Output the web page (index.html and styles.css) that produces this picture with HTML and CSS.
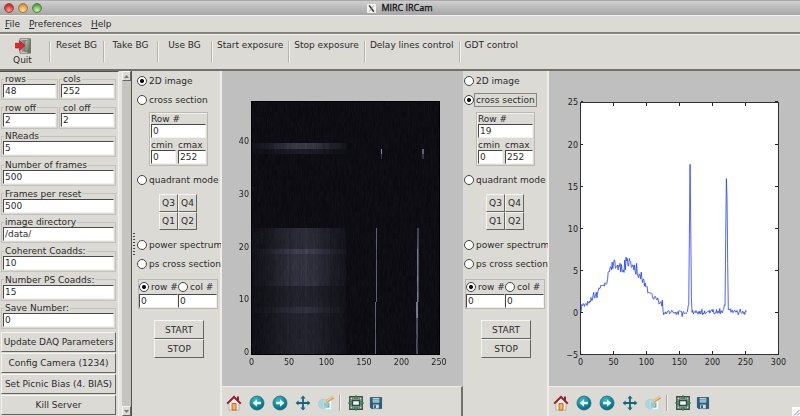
FILE: index.html
```html
<!DOCTYPE html>
<html lang="en">
<head>
<meta charset="utf-8">
<title>MIRC IRCam</title>
<link rel="stylesheet" href="styles.css">
</head>
<body>
<svg class="defs" aria-hidden="true">
  <defs>
    <radialGradient id="teal" cx="40%" cy="30%" r="75%">
      <stop offset="0" stop-color="#3fb9c6"/><stop offset=".6" stop-color="#0f8a9c"/><stop offset="1" stop-color="#0b5f70"/>
    </radialGradient>
    <linearGradient id="door" x1="0" y1="0" x2="1" y2="1">
      <stop offset="0" stop-color="#c8ccc4"/><stop offset=".5" stop-color="#8c9486"/><stop offset="1" stop-color="#3f6a2c"/>
    </linearGradient>
    <symbol id="i-home" viewBox="0 0 16 16">
      <path d="M3 8v7.2h10V8L8 3z" fill="#f4efe8" stroke="#a58f80" stroke-width=".6"/>
      <path d="M11 1.5h2v4h-2z" fill="#8d2434"/>
      <path d="M6 8.5h4v6.5H6z" fill="#f7b45a" stroke="#b5651d" stroke-width=".9"/>
      <path d="M1.2 8.6 8 1.8l6.8 6.8" fill="none" stroke="#a3162e" stroke-width="2"/>
    </symbol>
    <symbol id="i-back" viewBox="0 0 16 16">
      <circle cx="8" cy="8" r="7" fill="url(#teal)" stroke="#1b6674" stroke-width=".7"/>
      <path d="M3.6 8 8 4.2v2.5h4v2.6H8v2.5z" fill="#eafcff"/>
    </symbol>
    <symbol id="i-forward" viewBox="0 0 16 16">
      <circle cx="8" cy="8" r="7" fill="url(#teal)" stroke="#1b6674" stroke-width=".7"/>
      <path d="M12.4 8 8 4.2v2.5H4v2.6h4v2.5z" fill="#eafcff"/>
    </symbol>
    <symbol id="i-pan" viewBox="0 0 16 16">
      <path d="M8 .6l2.6 3H8.9v3.5h3.5V5.4l3 2.6-3 2.6V8.9H8.9v3.5h1.7l-2.6 3-2.6-3h1.7V8.9H3.6v1.7L.6 8l3-2.6v1.7h3.5V3.6H5.4z" fill="#17667c"/>
    </symbol>
    <symbol id="i-zoom" viewBox="0 0 16 16">
      <path d="M4.2 4.6h9.6v10.2H4.2z" fill="#f4fbfb" stroke="#b4d6da" stroke-width=".7"/>
      <path d="M6 7.6h5.4v5H6z" fill="#6fa9b3"/>
      <circle cx="5.2" cy="9" r="4.8" fill="#9fd3da" fill-opacity=".75" stroke="#a9cdd2" stroke-width=".8"/>
      <path d="M8.6 6.6 15.4 2.2" stroke="#e0964b" stroke-width="3"/>
      <path d="M8.6 6 15 1.8" stroke="#f8cf98" stroke-width="1.2"/>
    </symbol>
    <symbol id="i-subplots" viewBox="0 0 16 16">
      <path d="M1.8 1.8h12.4v12.4H1.8z" fill="#cfd9d5" stroke="#3c4a47" stroke-width="1.4"/>
      <path d="M2 4.8h12M2 11.2h12M4.6 2v12M11.4 2v12" stroke="#66736f" stroke-width=".9"/>
      <path d="M4.6 5.6h6.8v4.8H4.6z" fill="#f2f5f4" stroke="#37464a" stroke-width="1.2"/>
      <path d="M8 .2 10.4 3.8H5.6zM8 15.8l2.4-3.6H5.6zM.2 8l3.6-2.4v4.8zM15.8 8l-3.6-2.4v4.8z" fill="#35984c" stroke="#21653a" stroke-width=".5"/>
    </symbol>
    <symbol id="i-save" viewBox="0 0 16 16">
      <path d="M1.6 1.8h12.8v12.6H3l-1.4-1.3z" fill="#24607c" stroke="#184459" stroke-width=".8"/>
      <path d="M4.2 2.2h7.6v5.4H4.2z" fill="#b9d2dc"/>
      <path d="M4.2 4h7.6M4.2 5.8h7.6" stroke="#5a8ba0" stroke-width=".7"/>
      <path d="M4.8 9.8h6.4v4.4H4.8z" fill="#d4dde1"/><path d="M6 10.6h1.8v3H6z" fill="#184459"/>
    </symbol>
  </defs>
</svg>

<header class="titlebar">
  <div class="lights">
    <button class="light red" aria-label="Close"></button>
    <button class="light amber" aria-label="Minimize"></button>
    <button class="light green" aria-label="Zoom"></button>
  </div>
  <svg class="x-logo" viewBox="0 0 10 10" aria-hidden="true"><rect width="10" height="10" rx="1" fill="#f3f3f3"/><path d="M2.4 1.5 7.6 8.6" stroke="#333" stroke-width="1.7"/><path d="M7.6 1.4 2.4 8.6" stroke="#777" stroke-width=".7"/></svg>
  <h1>MIRC IRCam</h1>
</header>

<nav class="menubar">
  <button><u>F</u>ile</button>
  <button><u>P</u>references</button>
  <button><u>H</u>elp</button>
</nav>

<div class="toolbar">
  <button class="quit">
    <svg viewBox="0 0 16 16" aria-hidden="true">
      <path d="M5 .8h10.5v14.4H5z" fill="#e6e6e2" stroke="#6d7068" stroke-width=".9"/>
      <path d="M6.4 2h5v11.8h-5z" fill="#8a8b82"/>
      <path d="M10 3.2 14.8 1.2v13.6L10 13.6z" fill="url(#door)" stroke="#4e564a" stroke-width=".5"/>
      <path d="M.2 5.2h4.2V2.6L9.8 7.6l-5.4 5V10H.2z" fill="#e0262e" stroke="#a01820" stroke-width=".6"/>
    </svg>
    Quit
  </button>
  <button>Reset BG</button>
  <button>Take BG</button>
  <button>Use BG</button>
  <button>Start exposure</button>
  <button>Stop exposure</button>
  <button>Delay lines control</button>
  <button>GDT control</button>
</div>

<main class="workspace">
  <form class="settings">
    <div class="pair">
      <fieldset><legend><label for="rows">rows</label></legend><input id="rows" value="48"></fieldset>
      <fieldset><legend><label for="cols">cols</label></legend><input id="cols" value="252"></fieldset>
    </div>
    <div class="pair">
      <fieldset><legend><label for="rowoff">row off</label></legend><input id="rowoff" value="2"></fieldset>
      <fieldset><legend><label for="coloff">col off</label></legend><input id="coloff" value="2"></fieldset>
    </div>
    <div class="pair"><fieldset><legend><label for="nreads">NReads</label></legend><input id="nreads" value="5"></fieldset></div>
    <div class="pair"><fieldset><legend><label for="frames">Number of frames</label></legend><input id="frames" value="500"></fieldset></div>
    <div class="pair"><fieldset><legend><label for="fpr">Frames per reset</label></legend><input id="fpr" value="500"></fieldset></div>
    <div class="pair"><fieldset><legend><label for="dir">image directory</label></legend><input id="dir" value="/data/"></fieldset></div>
    <div class="pair"><fieldset><legend><label for="coadds">Coherent Coadds:</label></legend><input id="coadds" value="10"></fieldset></div>
    <div class="pair"><fieldset><legend><label for="pscoadds">Number PS Coadds:</label></legend><input id="pscoadds" value="15"></fieldset></div>
    <div class="pair"><fieldset><legend><label for="savenum">Save Number:</label></legend><input id="savenum" value="0"></fieldset></div>
    <div class="actions">
      <button type="button">Update DAQ Parameters</button>
      <button type="button">Config Camera (1234)</button>
      <button type="button">Set Picnic Bias (4. BIAS)</button>
      <button type="button">Kill Server</button>
    </div>
  </form>

  <div class="scroller">
    <button aria-label="Scroll up"><svg viewBox="0 0 5 3"><path d="M0 3 2.5 0 5 3z" fill="#777"/></svg></button>
    <button aria-label="Scroll down"><svg viewBox="0 0 5 3"><path d="M0 0h5L2.5 3z" fill="#777"/></svg></button>
  </div>

  <div class="splitter"></div>

  <form class="view">
    <label class="mode"><input type="radio" name="mode" checked><span>2D image</span></label>
    <label class="mode"><input type="radio" name="mode"><span>cross section</span></label>
    <div class="range">
      <label class="wide">Row #<input value="0"></label>
      <label>cmin<input value="0"></label>
      <label>cmax<input value="252"></label>
    </div>
    <label class="mode"><input type="radio" name="mode"><span>quadrant mode</span></label>
    <div class="quadrants">
      <button type="button">Q3</button><button type="button">Q4</button>
      <button type="button">Q1</button><button type="button">Q2</button>
    </div>
    <label class="mode"><input type="radio" name="mode"><span>power spectrum</span></label>
    <label class="mode"><input type="radio" name="mode"><span>ps cross section</span></label>
    <div class="axis">
      <label><input type="radio" name="axis" checked>row #</label>
      <label><input type="radio" name="axis">col #</label>
      <input value="0" aria-label="row number">
      <input value="0" aria-label="column number">
    </div>
    <div class="run">
      <button type="button">START</button>
      <button type="button">STOP</button>
    </div>
  </form>

  <section class="figure">
    <svg class="plot" viewBox="0 0 241 315">
      <foreignObject x="29" y="30" width="189" height="254"><canvas id="frame" width="252" height="48"></canvas></foreignObject>
      <rect x="29.5" y="30.5" width="188" height="253" fill="none" stroke="#000"/>
      <g id="image-axes"></g>
    </svg>
    <div class="nav">
      <button aria-label="Home"><svg><use href="#i-home"/></svg></button>
      <button aria-label="Back"><svg><use href="#i-back"/></svg></button>
      <button aria-label="Forward"><svg><use href="#i-forward"/></svg></button>
      <button aria-label="Pan"><svg><use href="#i-pan"/></svg></button>
      <button aria-label="Zoom"><svg><use href="#i-zoom"/></svg></button>
      <span class="sep"></span>
      <button aria-label="Configure subplots"><svg><use href="#i-subplots"/></svg></button>
      <button class="save" aria-label="Save"><svg><use href="#i-save"/></svg></button>
    </div>
  </section>

  <form class="view">
    <label class="mode"><input type="radio" name="mode"><span>2D image</span></label>
    <label class="mode focused"><input type="radio" name="mode" checked><span>cross section</span></label>
    <div class="range">
      <label class="wide">Row #<input value="19"></label>
      <label>cmin<input value="0"></label>
      <label>cmax<input value="252"></label>
    </div>
    <label class="mode"><input type="radio" name="mode"><span>quadrant mode</span></label>
    <div class="quadrants">
      <button type="button">Q3</button><button type="button">Q4</button>
      <button type="button">Q1</button><button type="button">Q2</button>
    </div>
    <label class="mode"><input type="radio" name="mode"><span>power spectrum</span></label>
    <label class="mode"><input type="radio" name="mode"><span>ps cross section</span></label>
    <div class="axis">
      <label><input type="radio" name="axis" checked>row #</label>
      <label><input type="radio" name="axis">col #</label>
      <input value="0" aria-label="row number">
      <input value="0" aria-label="column number">
    </div>
    <div class="run">
      <button type="button">START</button>
      <button type="button">STOP</button>
    </div>
  </form>

  <section class="figure last">
    <svg class="plot" viewBox="0 0 251 315">
      <rect x="31.5" y="31.5" width="198" height="252" fill="#fff" stroke="#333"/>
      <polyline id="trace" fill="none" stroke="#1f3fff" stroke-width=".8"/>
      <g id="trace-axes"></g>
    </svg>
    <div class="nav">
      <button aria-label="Home"><svg><use href="#i-home"/></svg></button>
      <button aria-label="Back"><svg><use href="#i-back"/></svg></button>
      <button aria-label="Forward"><svg><use href="#i-forward"/></svg></button>
      <button aria-label="Pan"><svg><use href="#i-pan"/></svg></button>
      <button aria-label="Zoom"><svg><use href="#i-zoom"/></svg></button>
      <span class="sep"></span>
      <button aria-label="Configure subplots"><svg><use href="#i-subplots"/></svg></button>
      <button class="save" aria-label="Save"><svg><use href="#i-save"/></svg></button>
      <svg class="grip" viewBox="0 0 8 9" aria-hidden="true"><path d="M0 0h8v9H0z" fill="#fff"/><path d="M2 8.5 7.5 3M5 8.5 7.5 6" stroke="#777" stroke-width=".9"/></svg>
    </div>
  </section>
</main>
<script src="plots.js"></script>
</body>
</html>
```
FILE: styles.css
```css
* { box-sizing: border-box; }
body {
  margin: 0;
  height: 100vh;
  display: flex;
  flex-direction: column;
  background: #dcdad5;
  color: #2b2b2b;
  font: 9px/10px "DejaVu Sans", sans-serif;
  white-space: nowrap;
  overflow: hidden;
}
button, input { font: inherit; color: inherit; margin: 0; border-radius: 0; }
button { padding: 0; border: 0; background: none; }
svg { display: block; }
.defs { position: absolute; width: 0; height: 0; }

.titlebar {
  position: relative;
  height: 15px;
  flex: none;
  display: flex;
  align-items: center;
  justify-content: center;
  gap: 5px;
  border-top: 1px solid #aaa;
  background: linear-gradient(#cfcfcf, #a6a6a6);
}
.titlebar h1 { margin: 0; font: 9px/10px "Open Sans", "DejaVu Sans", sans-serif; color: #111; -webkit-text-stroke: .3px #111; }
.x-logo { width: 9px; height: 9px; }
.lights { position: absolute; left: 4px; top: 2px; display: flex; gap: 4px; }
.light { width: 10px; height: 10px; border-radius: 50%; border: 1px solid #777; }
.red { background: radial-gradient(circle at 50% 75%, #ffb0a8, #e0302c 60%, #9b2a28); border-color: #9a4a48; }
.amber { background: radial-gradient(circle at 50% 75%, #ffe9a0, #ee9a3c 60%, #b06a28); border-color: #a87848; }
.green { background: radial-gradient(circle at 50% 75%, #d8f8b0, #66b048 60%, #3f7a30); border-color: #5a8250; }

.menubar {
  height: 19px;
  flex: none;
  display: flex;
  align-items: center;
  gap: 9px;
  padding: 0 5px;
  border-top: 1px solid #eee;
  border-bottom: 2px solid #85837e;
}
.toolbar {
  height: 37px;
  flex: none;
  display: flex;
  align-items: flex-start;
  padding: 6px 0 0 0;
  border-top: 1px solid #f2f1ee;
  border-bottom: 2px solid #73716d;
}
.toolbar button {
  min-width: 54px;
  height: 21px;
  padding: 0 5px 13px;
  line-height: 8px;
  border-left: 1px solid #b5b3ae;
  box-shadow: inset 1px 0 #f2f1ee;
}
.toolbar .quit {
  min-width: 49px;
  height: 27px;
  padding: 0 4px 0 0;
  margin-top: -3px;
  border: 0;
  box-shadow: none;
  line-height: 10px;
}
.quit svg { width: 16px; height: 16px; margin: 0 auto 1px; }

.workspace { flex: 1; min-height: 0; display: flex; }

.settings {
  width: 119px;
  flex: none;
  display: flex;
  flex-direction: column;
  padding: 2px 2px 1px 1px;
  border-top: 1px solid #55534f;
  border-right: 1px solid #f2f1ee;
}
.pair { flex: 1; display: flex; gap: 1px; align-items: flex-start; }
fieldset {
  flex: 1;
  min-width: 0;
  margin: 0;
  padding: 0 1px 1px;
  border: 1px solid #c3c1bc;
}
legend { margin-left: 1px; padding: 0 1px; height: 10px; }
legend label { display: block; }
input:not([type="radio"]) {
  display: block;
  width: 100%;
  height: 14px;
  padding: 0 1px;
  background: #fff;
  border: 1px solid #f2f1ee;
  border-top: 1px solid #4b4945;
  border-left: 1px solid #4b4945;
  outline: 0;
}
.actions { display: grid; gap: 1px; grid-auto-rows: 20px; }
.actions button, .quadrants button, .run button, .scroller button {
  background: #dcdad5;
  border: 1px solid #f6f5f2;
  border-right-color: #66645f;
  border-bottom-color: #66645f;
}

.scroller {
  width: 13px;
  flex: none;
  display: flex;
  flex-direction: column;
  justify-content: space-between;
  padding-left: 3px;
  border-right: 1px solid #55534f;
  background: linear-gradient(90deg, #e6e4e0 3px, #c6c4be 3px);
}
.scroller button { width: 9px; height: 10px; display: grid; place-items: center; }
.scroller svg { width: 5px; height: 3px; }

.splitter {
  width: 4px;
  flex: none;
  display: grid;
  place-items: center;
}
.splitter::before {
  content: "";
  width: 2px;
  height: 22px;
  background: repeating-linear-gradient(#444 0 1px, transparent 1px 3px);
}

.view {
  width: 85px;
  flex: none;
  display: flex;
  flex-direction: column;
  border-right: 1px solid #eeedea;
}
.mode { display: flex; align-items: center; height: 19px; flex: none; gap: 1px; padding-left: 1px; }
.mode span { padding: 1px; border: 1px solid transparent; }
.mode input + span { margin-left: -1px; }
.focused span { border-color: #8a8884; }
input[type="radio"] {
  appearance: none;
  width: 10px;
  height: 10px;
  flex: none;
  border: 1px solid #444;
  border-radius: 50%;
  background: #fff;
}
input[type="radio"]:checked { background: radial-gradient(circle, #111 0 1.6px, #fff 2.4px); }

.range {
  width: 59px;
  margin: 3px 0 4px 13px;
  padding: 1px;
  display: grid;
  grid-template-columns: 25px 1fr;
  gap: 2px;
  border: 1px solid #bab8b3;
  box-shadow: inset 1px 1px #f2f1ee;
}
.range label { min-width: 0; }
.wide { grid-column: 1 / -1; }
.quadrants {
  width: 38px;
  margin: 5px 0 5px 23px;
  display: grid;
  grid-template-columns: 1fr 1fr;
  grid-auto-rows: 18px;
}
.axis {
  width: 80px;
  margin: 6px 0 11px 2px;
  display: grid;
  grid-template-columns: 1fr 1fr;
  grid-template-rows: 14px 14px;
  border: 1px solid #bab8b3;
}
.axis label { display: flex; align-items: center; gap: 2px; min-width: 0; }
.run { width: 50px; margin-left: 18px; display: grid; grid-auto-rows: 19px; }

.figure { flex: 241 1 0; min-width: 0; display: flex; flex-direction: column; border-left: 1px solid #eeedea; background: #bfbfbf; }
.last { flex-grow: 251; }
.plot { flex: 1; min-height: 0; width: 100%; font: 8px "DejaVu Sans", sans-serif; fill: #222; }
.plot canvas { display: block; width: 100%; height: 100%; image-rendering: pixelated; }
.nav {
  position: relative;
  height: 30px;
  flex: none;
  display: flex;
  align-items: center;
  padding-top: 2px;
  background: #dcdad5;
  border-top: 1px solid #eeedea;
  border-right: 2px solid #73716d;
}
.last .nav { border-right: 0; }
.nav button { width: 23px; height: 20px; display: grid; place-items: center; }
.nav button svg { width: 16px; height: 16px; }
.nav .save { width: 18px; }
.nav .save svg { width: 14px; height: 14px; }
.sep { width: 2px; height: 16px; margin: 0 3px 0 2px; border-left: 1px solid #a9a7a2; border-right: 1px solid #f2f1ee; }
.grip { position: absolute; right: 0; bottom: 0; width: 8px; height: 9px; }
```
FILE: plots.js
```js
const NS = 'http://www.w3.org/2000/svg';

let seed = 7;
function rand() {
  seed = (seed * 16807) % 2147483647;
  return seed / 2147483647;
}
const noise = () => rand() + rand() - 1;

function label(g, x, y, anchor, text) {
  const t = document.createElementNS(NS, 'text');
  t.setAttribute('x', x);
  t.setAttribute('y', y);
  t.setAttribute('text-anchor', anchor);
  t.textContent = text;
  g.appendChild(t);
}
function tick(g, d) {
  const p = document.createElementNS(NS, 'path');
  p.setAttribute('d', d);
  p.setAttribute('stroke', '#222');
  g.appendChild(p);
}

// Detector frame: dark noise, fringe patch and two spectral lines.
const canvas = document.getElementById('frame');
const ctx = canvas.getContext('2d');
const img = ctx.createImageData(252, 48);
const rowGain = r => {
  if (r === 39) return 1.3;
  if (r === 38) return 0.45;
  if (r > 23) return 0;
  if (r === 19) return 1.45;
  if (r > 19) return 0.9;
  if (r > 12) return 1.1;
  if (r === 8) return 1;
  return 0.65;
};
const columns = Array.from({ length: 252 }, () => 1 + 0.14 * noise());
for (let r = 0; r < 48; r++) {
  for (let c = 0; c < 252; c++) {
    const hump = c < 127 ? Math.exp(-(((c - 68) / 46) ** 2)) : 0;
    let v = 13 + 4 * noise() + 33 * hump * rowGain(r) * columns[c];
    if (r < 24) {
      const drift = r < 10 ? 0 : 1;
      if (c === 165 + drift || c === 166 + drift) v = 90 + 12 * noise();
      const bright = r > 6 && r < 20 ? 115 : 70;
      if (c === 220 + drift || c === 221 + drift) v = bright + 14 * noise();
      if (r > 8 && c === 222 + drift) v = 65;
    }
    if ((r === 38 || r === 37) && (c === 173 || c === 174)) v = r === 38 ? 130 : 55;
    if ((r === 38 || r === 37) && (c === 228 || c === 229)) v = r === 38 ? 95 : 50;
    const i = ((47 - r) * 252 + c) * 4;
    img.data[i] = v;
    img.data[i + 1] = v > 60 ? v * 1.06 : v;
    img.data[i + 2] = v * 1.22 + 3;
    img.data[i + 3] = 255;
  }
}
ctx.putImageData(img, 0, 0);

const left = document.getElementById('image-axes');
for (let x = 0; x <= 250; x += 50) label(left, 29.5 + x * 0.75, 294, 'middle', x);
for (let y = 0; y <= 40; y += 10) label(left, 27, 284 - y * 5.27, 'end', y);

// Cross section of row 19.
const shape = [[0, 0.2], [4, 1], [12, 1], [20, 1.8], [25, 2], [30, 3.5], [35, 3], [40, 4], [44, 4.7],
  [47, 6], [52, 5.5], [62, 5.2], [70, 6.1], [76, 5.8], [80, 5], [87, 5], [90, 4.5], [95, 3.8],
  [105, 2.4], [112, 2], [118, 1.4], [124, 1.1], [126, -0.3], [132, 0], [162, -0.1], [163, 0.6],
  [164, 1], [165, 9.3], [166, 17.6], [167, 10.6], [168, 2], [169, 0], [215, 0.1], [218, 0.6],
  [219, 1], [220, 8.8], [221, 15.9], [222, 13.6], [223, 6], [224, 0.3], [252, 0]];
function level(x) {
  const k = shape.findIndex(p => p[0] >= x);
  if (k <= 0) return shape[0][1];
  const [x0, y0] = shape[k - 1];
  const [x1, y1] = shape[k];
  return y0 + (y1 - y0) * (x - x0) / (x1 - x0);
}
const points = [];
for (let x = 0; x <= 252; x++) {
  const base = level(x);
  const amp = base > 6.8 ? 0 : 0.42 + Math.max(0, base) * 0.1;
  const y = base + amp * noise();
  points.push((31.5 + x * 0.66).toFixed(2) + ',' + (241.5 - y * 8.42).toFixed(2));
}
document.getElementById('trace').setAttribute('points', points.join(' '));

const right = document.getElementById('trace-axes');
for (let x = 0; x <= 300; x += 50) {
  const px = 31.5 + Math.round(x * 0.66);
  label(right, px, 294, 'middle', x);
  tick(right, `M${px} 283v-3M${px} 32v3`);
}
for (let y = -5; y <= 25; y += 5) {
  const py = 241.5 - Math.round(y * 8.42);
  label(right, 29, py + 3, 'end', String(y).replace('-', '\u2212'));
  tick(right, `M32 ${py}h2M229 ${py}h-3`);
}
```
